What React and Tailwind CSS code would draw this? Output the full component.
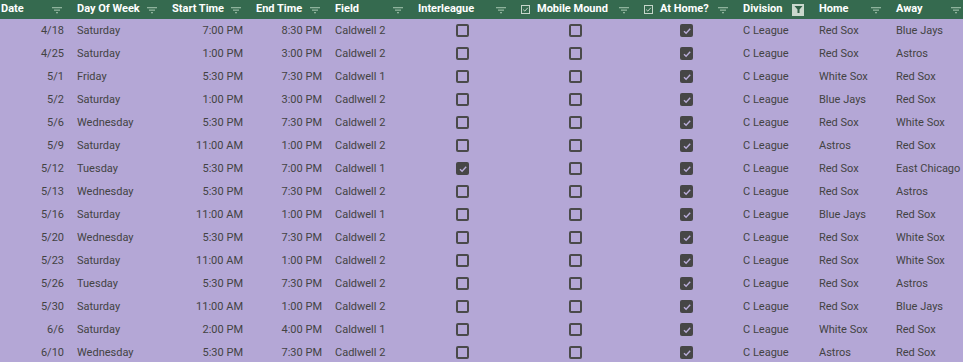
import React from 'react'

const rows = [
  ['4/18', 'Saturday', '7:00 PM', '8:30 PM', 'Caldwell 2', false, false, true, 'C League', 'Red Sox', 'Blue Jays'],
  ['4/25', 'Saturday', '1:00 PM', '3:00 PM', 'Caldwell 2', false, false, true, 'C League', 'Red Sox', 'Astros'],
  ['5/1', 'Friday', '5:30 PM', '7:30 PM', 'Caldwell 1', false, false, true, 'C League', 'White Sox', 'Red Sox'],
  ['5/2', 'Saturday', '1:00 PM', '3:00 PM', 'Cadlwell 2', false, false, true, 'C League', 'Blue Jays', 'Red Sox'],
  ['5/6', 'Wednesday', '5:30 PM', '7:30 PM', 'Caldwell 2', false, false, true, 'C League', 'Red Sox', 'White Sox'],
  ['5/9', 'Saturday', '11:00 AM', '1:00 PM', 'Caldwell 2', false, false, true, 'C League', 'Astros', 'Red Sox'],
  ['5/12', 'Tuesday', '5:30 PM', '7:00 PM', 'Caldwell 1', true, false, true, 'C League', 'Red Sox', 'East Chicago'],
  ['5/13', 'Wednesday', '5:30 PM', '7:30 PM', 'Caldwell 2', false, false, true, 'C League', 'Red Sox', 'Astros'],
  ['5/16', 'Saturday', '11:00 AM', '1:00 PM', 'Caldwell 1', false, false, true, 'C League', 'Blue Jays', 'Red Sox'],
  ['5/20', 'Wednesday', '5:30 PM', '7:30 PM', 'Caldwell 2', false, false, true, 'C League', 'Red Sox', 'White Sox'],
  ['5/23', 'Saturday', '11:00 AM', '1:00 PM', 'Caldwell 2', false, false, true, 'C League', 'Red Sox', 'White Sox'],
  ['5/26', 'Tuesday', '5:30 PM', '7:30 PM', 'Caldwell 2', false, false, true, 'C League', 'Red Sox', 'Astros'],
  ['5/30', 'Saturday', '11:00 AM', '1:00 PM', 'Caldwell 2', false, false, true, 'C League', 'Red Sox', 'Blue Jays'],
  ['6/6', 'Saturday', '2:00 PM', '4:00 PM', 'Caldwell 1', false, false, true, 'C League', 'White Sox', 'Red Sox'],
  ['6/10', 'Wednesday', '5:30 PM', '7:30 PM', 'Cadlwell 2', false, false, true, 'C League', 'Astros', 'Red Sox'],
]

function FilterIcon() {
  return (
    <svg width="10" height="8" viewBox="0 0 10 8" className="shrink-0">
      <rect x="0" y="1" width="10" height="1.3" fill="#8fb39d" />
      <rect x="2" y="3.5" width="6" height="1.3" fill="#8fb39d" />
      <rect x="4" y="6" width="2" height="1.3" fill="#8fb39d" />
    </svg>
  )
}

function ActiveFilter() {
  return (
    <div className="w-3 h-3 bg-[#c9d8cd] flex items-center justify-center shrink-0">
      <svg width="9" height="9" viewBox="0 0 9 9">
        <path d="M0.5 1 H8.5 L5.5 4.5 V8 H3.5 V4.5 Z" fill="#2f5f46" />
      </svg>
    </div>
  )
}

function HeadCheck() {
  return (
    <svg width="9" height="9" viewBox="0 0 9 9" className="shrink-0">
      <rect x="0.5" y="0.5" width="8" height="8" fill="none" stroke="#c5d6ca" strokeWidth="1" />
      <path d="M2.2 4.6 L3.8 6.1 L6.8 2.8" fill="none" stroke="#c5d6ca" strokeWidth="1" />
    </svg>
  )
}

function Box({ on }) {
  if (on) {
    return (
      <div className="w-[13px] h-[13px] rounded-[2px] bg-[#464646] flex items-center justify-center">
        <svg width="10" height="10" viewBox="0 0 10 10">
          <path d="M2 5.2 L4.1 7.2 L8.2 2.8" fill="none" stroke="#b9add9" strokeWidth="1.4" />
        </svg>
      </div>
    )
  }
  return <div className="w-[13px] h-[13px] rounded-[2px] border-2 border-[#4a4a4a]" />
}

const cols = [
  { w: 'w-[70px]', title: 'Date', pl: 'pl-[1px]' },
  { w: 'w-[95px]', title: 'Day Of Week' },
  { w: 'w-[84px]', title: 'Start Time' },
  { w: 'w-[79px]', title: 'End Time' },
  { w: 'w-[83px]', title: 'Field' },
  { w: 'w-[103px]', title: 'Interleague' },
  { w: 'w-[123px]', title: 'Mobile Mound', check: true },
  { w: 'w-[99px]', title: 'At Home?', check: true },
  { w: 'w-[76px]', title: 'Division', active: true },
  { w: 'w-[77px]', title: 'Home' },
  { w: 'w-[80px]', title: 'Away' },
]

export default function App() {
  return (
    <div className="w-[963px] h-[362px] overflow-hidden bg-[#b4a7d6] font-['Roboto',sans-serif] text-[11px]">
      <div className="flex h-[19px] bg-[#356a4f] text-white font-bold">
        {cols.map((c) => (
          <div key={c.title} className={`${c.w} shrink-0 flex items-center ${c.pl || 'pl-[7px]'} pr-[8px] gap-[7px]`}>
            {c.check && <HeadCheck />}
            <span className="whitespace-nowrap">{c.title}</span>
            <div className="ml-auto">{c.active ? <ActiveFilter /> : <FilterIcon />}</div>
          </div>
        ))}
      </div>
      {rows.map((r) => (
        <div key={r[0]} className="flex h-[23px] items-center text-[#434343]">
          <div className="w-[70px] shrink-0 text-right pr-[6px] pt-[2px]">{r[0]}</div>
          <div className="w-[95px] shrink-0 pl-[7px] pt-[2px]">{r[1]}</div>
          <div className="w-[84px] shrink-0 text-right pr-[6px] pt-[2px]">{r[2]}</div>
          <div className="w-[79px] shrink-0 text-right pr-[6px] pt-[2px]">{r[3]}</div>
          <div className="w-[83px] shrink-0 pl-[7px] pt-[2px]">{r[4]}</div>
          <div className="w-[103px] shrink-0 flex justify-center"><Box on={r[5]} /></div>
          <div className="w-[123px] shrink-0 flex justify-center"><Box on={r[6]} /></div>
          <div className="w-[99px] shrink-0 flex justify-center"><Box on={r[7]} /></div>
          <div className="w-[76px] shrink-0 pl-[7px] pt-[2px]">{r[8]}</div>
          <div className="w-[77px] shrink-0 pl-[7px] pt-[2px]">{r[9]}</div>
          <div className="w-[80px] shrink-0 pl-[7px] pt-[2px] whitespace-nowrap">{r[10]}</div>
        </div>
      ))}
    </div>
  )
}
